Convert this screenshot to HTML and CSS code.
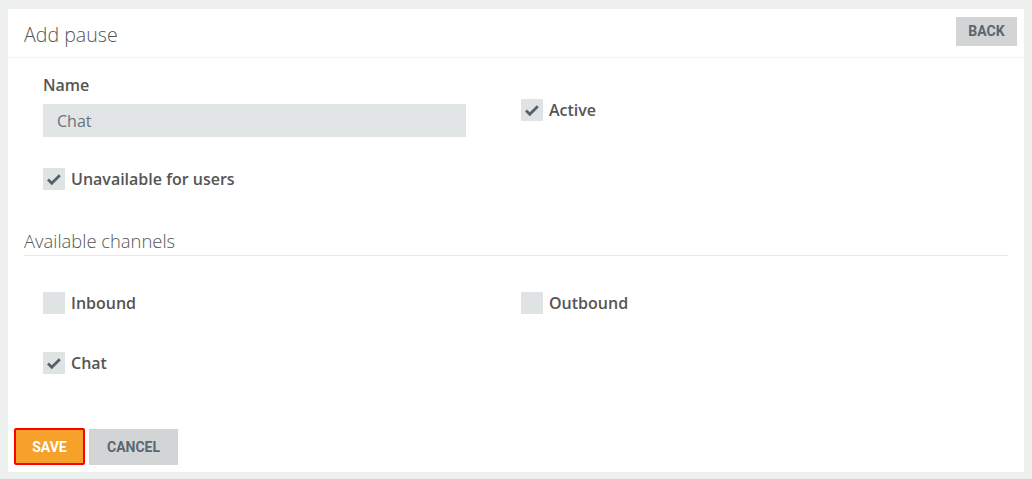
FILE: index.html
```html
<!DOCTYPE html>
<html>
<head>
<meta charset="utf-8">
<link rel="stylesheet" href="styles.css">
</head>
<body>
<div class="card">
  <div class="header">
    <h1 class="title">Add pause</h1>
    <button class="btn btn-gray btn-back">BACK</button>
  </div>
  <div class="content">
    <div class="grid">
      <div class="col">
        <label class="field-label">Name</label>
        <div class="input">Chat</div>
      </div>
      <div class="col col-center">
        <div class="check"><span class="box on"><svg viewBox="0 0 22 22" width="22" height="22"><path d="M5 11.5l3.8 3.8 8-8" fill="none" stroke="#56626b" stroke-width="2.8"/></svg></span><span class="check-label">Active</span></div>
      </div>
    </div>
    <div class="grid row-unavail">
      <div class="col">
        <div class="check"><span class="box on"><svg viewBox="0 0 22 22" width="22" height="22"><path d="M5 11.5l3.8 3.8 8-8" fill="none" stroke="#56626b" stroke-width="2.8"/></svg></span><span class="check-label">Unavailable for users</span></div>
      </div>
    </div>
    <h2 class="section">Available channels</h2>
    <div class="grid row-ch1">
      <div class="col">
        <div class="check"><span class="box"></span><span class="check-label">Inbound</span></div>
      </div>
      <div class="col">
        <div class="check"><span class="box"></span><span class="check-label">Outbound</span></div>
      </div>
    </div>
    <div class="grid row-ch2">
      <div class="col">
        <div class="check"><span class="box on"><svg viewBox="0 0 22 22" width="22" height="22"><path d="M5 11.5l3.8 3.8 8-8" fill="none" stroke="#56626b" stroke-width="2.8"/></svg></span><span class="check-label">Chat</span></div>
      </div>
    </div>
  </div>
  <div class="footer">
    <button class="btn btn-save">SAVE</button>
    <button class="btn btn-gray btn-cancel">CANCEL</button>
  </div>
</div>
</body>
</html>
```
FILE: styles.css
```css
html, body {
  margin: 0;
  padding: 0;
  background: #eef0ef;
}
body {
  padding: 9px 8px 7px 8px;
  font-family: "Open Sans", "Noto Sans", sans-serif;
  color: #555;
}
.card {
  background: #fff;
  height: 463px;
  box-sizing: border-box;
  display: flex;
  flex-direction: column;
}
.header {
  display: flex;
  align-items: center;
  justify-content: space-between;
  height: 48px;
  border-bottom: 1px solid #f3f4f4;
  padding: 0 7px 0 16px;
}
.title {
  margin: 0;
  font-weight: 300;
  font-size: 19.6px;
  color: #555;
  position: relative;
  top: 1px;
}
.btn {
  border: none;
  font-family: "Roboto", "Liberation Sans", sans-serif;
  font-weight: 700;
  font-size: 14px;
  letter-spacing: 0;
  cursor: pointer;
  padding: 0;
}
.btn-gray {
  background: #d3d4d5;
  color: #5a6670;
}
.btn-back {
  width: 61px;
  height: 29px;
  margin-top: -4px;
}
.content {
  padding: 0 16px;
  flex: 1;
}
.grid {
  display: grid;
  grid-template-columns: 478px 1fr;
  padding-left: 19px;
}
.grid:first-child {
  padding-top: 17px;
}
.col-center {
  display: flex;
  align-items: center;
  padding-top: 7px;
}
.field-label {
  display: block;
  font-weight: 600;
  font-size: 16px;
  color: #555;
  line-height: 20px;
  margin-bottom: 9px;
}
.input {
  width: 423px;
  height: 33px;
  box-sizing: border-box;
  background: #e2e5e6;
  color: #66737c;
  font-size: 16px;
  line-height: 34px;
  padding-left: 14px;
}
.row-unavail {
  padding-top: 31px;
}
.check {
  display: flex;
  align-items: center;
  height: 22px;
}
.box {
  width: 22px;
  height: 22px;
  background: #e0e3e4;
  display: inline-block;
  flex: none;
}
.box svg {
  display: block;
}
.check-label {
  margin-left: 6px;
  font-weight: 600;
  font-size: 16px;
  color: #555;
}
.section {
  margin: 39px 0 0 0;
  font-weight: 300;
  font-size: 18.4px;
  color: #555;
  line-height: 24px;
  padding-bottom: 2px;
  border-bottom: 1px solid #e9eaea;
}
.row-ch1 {
  padding-top: 36px;
}
.row-ch2 {
  padding-top: 38px;
}
.footer {
  display: flex;
  align-items: flex-start;
  gap: 4px;
  padding: 0 0 7px 6px;
}
.btn-save {
  background: #f5a12a;
  color: #fff;
  width: 71px;
  height: 37px;
  border: 2px solid #f00;
  border-radius: 2px;
  margin-top: -1px;
}
.btn-cancel {
  width: 89px;
  height: 36px;
}
```
